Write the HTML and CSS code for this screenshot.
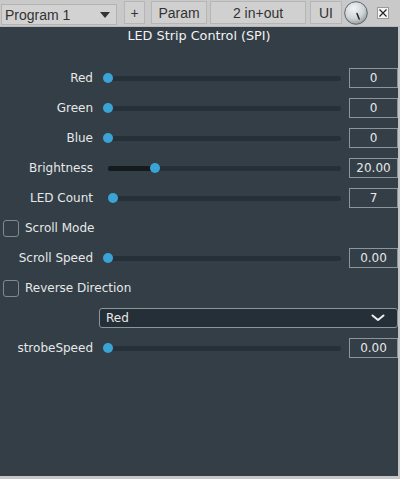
FILE: index.html
```html
<!DOCTYPE html>
<html>
<head>
<meta charset="utf-8">
<link rel="stylesheet" href="styles.css">
</head>
<body>
<div class="toolbar">
  <div class="select">
    <span>Program 1</span>
    <svg class="tri" width="10" height="6" viewBox="0 0 10 6"><path d="M0 0 L10 0 L5 6 Z" fill="#333"/></svg>
  </div>
  <div class="btn b-plus">+</div>
  <div class="btn b-param">Param</div>
  <div class="btn b-io">2 in+out</div>
  <div class="btn b-ui">UI</div>
  <svg class="knob" width="24" height="24" viewBox="0 0 24 24">
    <defs>
      <radialGradient id="kg" cx="40%" cy="30%" r="75%">
        <stop offset="0" stop-color="#f2f4f4"/>
        <stop offset="0.6" stop-color="#cfd4d6"/>
        <stop offset="1" stop-color="#8e969a"/>
      </radialGradient>
    </defs>
    <circle cx="12" cy="12" r="11.3" fill="url(#kg)" stroke="#5d6568" stroke-width="1"/>
    <path d="M13 12.5 L15.2 18" stroke="#222" stroke-width="1.5" stroke-linecap="round"/>
  </svg>
  <div class="close">
    <svg width="10" height="10" viewBox="0 0 10 10"><path d="M1.5 1.5 L8.5 8.5 M8.5 1.5 L1.5 8.5" stroke="#222" stroke-width="1.2"/></svg>
  </div>
</div>
<div class="panel">
  <div class="title">LED Strip Control (SPI)</div>
  <div class="rows">
    <div class="row">
      <div class="label">Red</div>
      <div class="slider"><div class="track"><div class="dot" style="left:0%"></div></div></div>
      <div class="value">0</div>
    </div>
    <div class="row">
      <div class="label">Green</div>
      <div class="slider"><div class="track"><div class="dot" style="left:0%"></div></div></div>
      <div class="value">0</div>
    </div>
    <div class="row">
      <div class="label">Blue</div>
      <div class="slider"><div class="track"><div class="dot" style="left:0%"></div></div></div>
      <div class="value">0</div>
    </div>
    <div class="row">
      <div class="label">Brightness</div>
      <div class="slider"><div class="track"><div class="fill" style="width:20%"></div><div class="dot" style="left:20%"></div></div></div>
      <div class="value">20.00</div>
    </div>
    <div class="row">
      <div class="label">LED Count</div>
      <div class="slider"><div class="track"><div class="dot" style="left:2.2%"></div></div></div>
      <div class="value">7</div>
    </div>
    <div class="row check-row">
      <div class="checkbox"></div>
      <div class="check-label">Scroll Mode</div>
    </div>
    <div class="row">
      <div class="label">Scroll Speed</div>
      <div class="slider"><div class="track"><div class="dot" style="left:0%"></div></div></div>
      <div class="value">0.00</div>
    </div>
    <div class="row check-row">
      <div class="checkbox"></div>
      <div class="check-label">Reverse Direction</div>
    </div>
    <div class="row combo-row">
      <div class="combo">
        <span>Red</span>
        <svg width="14" height="8" viewBox="0 0 14 8"><path d="M1.5 1.5 L7 6 L12.5 1.5" fill="none" stroke="#f0f0f0" stroke-width="2" stroke-linecap="round" stroke-linejoin="round"/></svg>
      </div>
    </div>
    <div class="row">
      <div class="label">strobeSpeed</div>
      <div class="slider"><div class="track"><div class="dot" style="left:0%"></div></div></div>
      <div class="value">0.00</div>
    </div>
  </div>
</div>
</body>
</html>
```
FILE: styles.css
```css
html, body {
  margin: 0;
  padding: 0;
}
body {
  width: 400px;
  height: 479px;
  background: #c4c6c7;
  overflow: hidden;
  font-family: "DejaVu Sans", sans-serif;
}
.toolbar {
  height: 27px;
  display: flex;
  align-items: flex-start;
  background: #c9c9c9;
  font-family: "Liberation Sans", Arial, sans-serif;
  font-size: 14px;
  color: #333;
  box-sizing: border-box;
  border-bottom: 1px solid #b8b8b8;
}
.select {
  margin-left: 1px;
  margin-top: 4px;
  width: 116px;
  height: 21px;
  box-sizing: border-box;
  border: 1px solid #b3b3b3;
  background: #d2d2d2;
  display: flex;
  align-items: center;
  justify-content: space-between;
  padding: 0 6px 0 3px;
}
.tri { margin-top: 1px; }
.btn {
  height: 23px;
  margin-top: 1px;
  box-sizing: border-box;
  border: 1px solid #b6b6b6;
  background: #d0d0d0;
  display: flex;
  align-items: center;
  justify-content: center;
}
.b-plus { margin-left: 7px; width: 21px; }
.b-param { margin-left: 6px; width: 56px; }
.b-io { margin-left: 3px; width: 96px; }
.b-ui { margin-left: 4px; width: 32px; }
.knob { margin-left: 2px; margin-top: 1px; }
.close {
  margin-left: 9px;
  margin-top: 7px;
  width: 12px;
  height: 12px;
  box-sizing: border-box;
  border: 1px solid #9a9a9a;
  background: #f4f4f4;
  display: flex;
  align-items: center;
  justify-content: center;
}
.panel {
  width: 398px;
  height: 449px;
  background: #333e46;
  color: #e6e8e9;
  font-size: 12px;
}
.title {
  height: 16px;
  line-height: 16px;
  text-align: center;
  padding-top: 1px;
  font-size: 12.8px;
  color: #f2f2f2;
}
.rows {
  padding-top: 19px;
  display: flex;
  flex-direction: column;
}
.row {
  height: 30px;
  display: flex;
  align-items: center;
}
.label {
  width: 93px;
  text-align: right;
  flex: none;
}
.slider {
  margin-left: 15px;
  width: 233px;
  flex: none;
}
.track {
  position: relative;
  height: 5px;
  border-radius: 2.5px;
  background: #263038;
}
.fill {
  position: absolute;
  left: 0;
  top: 0;
  bottom: 0;
  border-radius: 2.5px;
  background: #151a1d;
}
.dot {
  position: absolute;
  top: 50%;
  width: 10px;
  height: 10px;
  border-radius: 50%;
  background: #3ba4d6;
  transform: translate(-50%, -50%);
}
.value {
  margin-left: 8px;
  width: 49px;
  height: 20px;
  box-sizing: border-box;
  border: 1px solid #8b959b;
  display: flex;
  align-items: center;
  justify-content: center;
  flex: none;
}
.check-row {
  padding-left: 3px;
}
.checkbox {
  width: 16px;
  height: 17px;
  box-sizing: border-box;
  border: 1px solid #7f898e;
  border-radius: 3px;
}
.check-label {
  margin-left: 6px;
}
.combo-row {
  padding-left: 99px;
}
.combo {
  width: 299px;
  height: 20px;
  box-sizing: border-box;
  border: 1px solid #8b959b;
  border-radius: 3px;
  background: #252f37;
  display: flex;
  align-items: center;
  justify-content: space-between;
  padding: 0 12px 0 6px;
}
```
